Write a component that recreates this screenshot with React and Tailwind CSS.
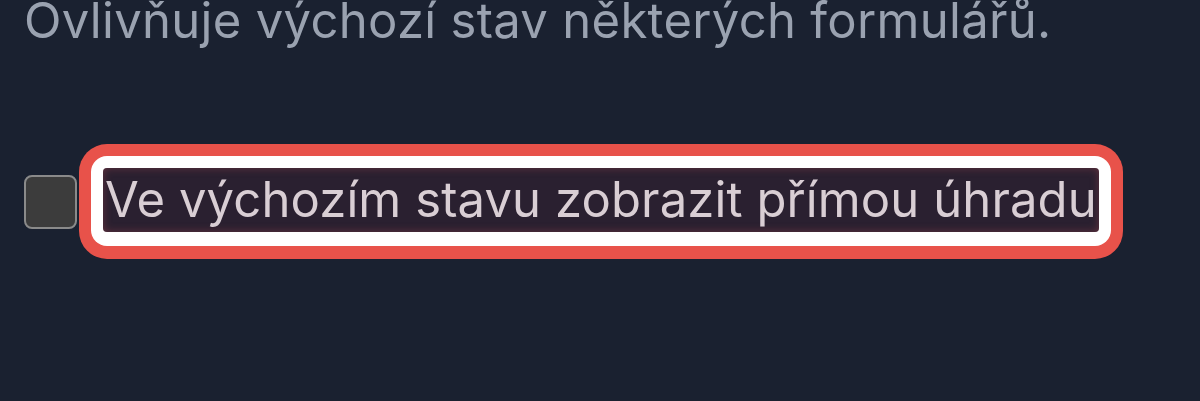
import React from 'react'

export default function App() {
    return (
        <div
            className="w-[1200px] h-[401px] bg-[#1a2130] overflow-hidden"
            style={{ fontFamily: "Inter, 'Noto Sans', sans-serif" }}
        >
            <p className="pl-[24px] text-[49px] leading-none text-[#9aa2b0] -mt-[4px] tracking-[0.3px] whitespace-nowrap">
                Ovlivňuje výchozí stav některých formulářů.
            </p>
            <div className="flex items-center mt-[99px] pl-[24px]">
                <div className="w-[53px] h-[54px] shrink-0 rounded-[8px] border-2 border-[#8a8a8a] bg-[#3c3c3c]"></div>
                <div className="ml-[2px] rounded-[28px] bg-[#e8524a] p-[12px] pb-[13px]">
                    <div className="rounded-[16px] bg-white p-[12px] pb-[14px]">
                        <label className="block rounded-[4px] bg-[#2a2030] shadow-[inset_0_0_8px_rgba(170,70,80,0.45)] px-[2px] h-[64px] text-[49px] leading-[64px] tracking-[0.1px] text-[#d9ced4] whitespace-nowrap">
                            Ve výchozím stavu zobrazit přímou úhradu
                        </label>
                    </div>
                </div>
            </div>
        </div>
    )
}
